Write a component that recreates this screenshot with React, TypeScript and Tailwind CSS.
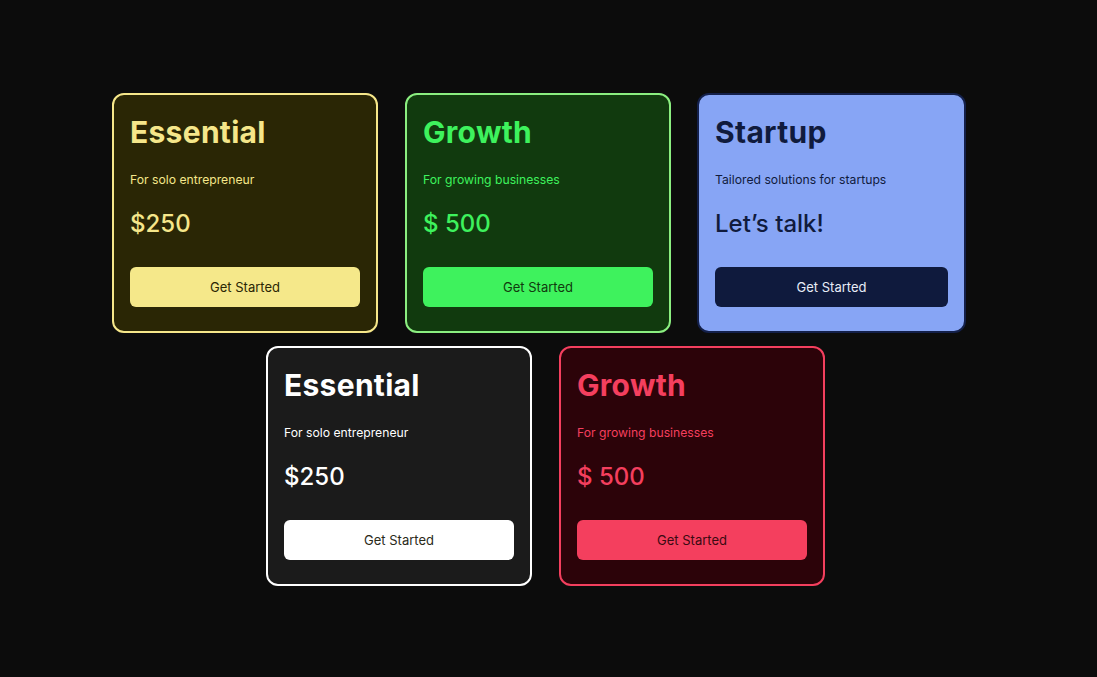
import React from "react";

type Plan = {
  title: string;
  sub: string;
  price: string;
  card: string;
  text: string;
  btn: string;
  w?: string;
};

const Card = ({ p }: { p: Plan }) => (
  <div
    className={`flex flex-col rounded-[12px] border-2 px-4 pt-[17px] pb-[24px] ${p.card} ${p.w ?? "w-[266px]"}`}
  >
    <div className={`text-[30px] font-bold leading-[40px] tracking-[0.3px] ${p.text}`}>{p.title}</div>
    <div className={`mt-[18px] text-[12.2px] leading-[20px] ${p.text}`}>{p.sub}</div>
    <div className={`mt-[18px] text-[24px] font-medium leading-[32px] ${p.text}`}>{p.price}</div>
    <button className={`mt-[27px] flex h-[40px] w-full items-center justify-center rounded-[6px] pt-px text-[13px] ${p.btn}`}>
      Get Started
    </button>
  </div>
);

const row1: Plan[] = [
  {
    title: "Essential",
    sub: "For solo entrepreneur",
    price: "$250",
    card: "bg-[#2a2605] border-[#f6e78a]",
    text: "text-[#f5e68a]",
    btn: "bg-[#f5e88a] text-[#2a2605]",
  },
  {
    title: "Growth",
    sub: "For growing businesses",
    price: "$ 500",
    card: "bg-[#113a0e] border-[#8bef80]",
    text: "text-[#3ef25d]",
    btn: "bg-[#3ef25d] text-[#113a0e]",
  },
  {
    title: "Startup",
    sub: "Tailored solutions for startups",
    price: "Let\u2019s talk!",
    card: "bg-[#87a5f5] border-[#14204a] -ml-px",
    text: "text-[#101b3d]",
    btn: "bg-[#0f1a3d] text-[#e8ecf7]",
    w: "w-[269px]",
  },
];

const row2: Plan[] = [
  {
    title: "Essential",
    sub: "For solo entrepreneur",
    price: "$250",
    card: "bg-[#1b1b1b] border-[#ffffff]",
    text: "text-white",
    btn: "bg-white text-[#2a2a1a]",
  },
  {
    title: "Growth",
    sub: "For growing businesses",
    price: "$ 500",
    card: "bg-[#2c0309] border-[#f43f5e]",
    text: "text-[#f43f5e]",
    btn: "bg-[#f43f5e] text-[#3a0a12]",
  },
];

export default function App() {
  return (
    <div
      className="min-h-[677px] w-full bg-[#0c0c0c] pt-[93px]"
      style={{ fontFamily: "Inter, 'Noto Sans', sans-serif" }}
    >
      <div className="flex flex-col gap-[13px]">
        <div className="flex gap-[27px] pl-[112px]">
          {row1.map((p, i) => (
            <Card key={i} p={p} />
          ))}
        </div>
        <div className="flex gap-[27px] pl-[266px]">
          {row2.map((p, i) => (
            <Card key={i} p={p} />
          ))}
        </div>
      </div>
    </div>
  );
}
